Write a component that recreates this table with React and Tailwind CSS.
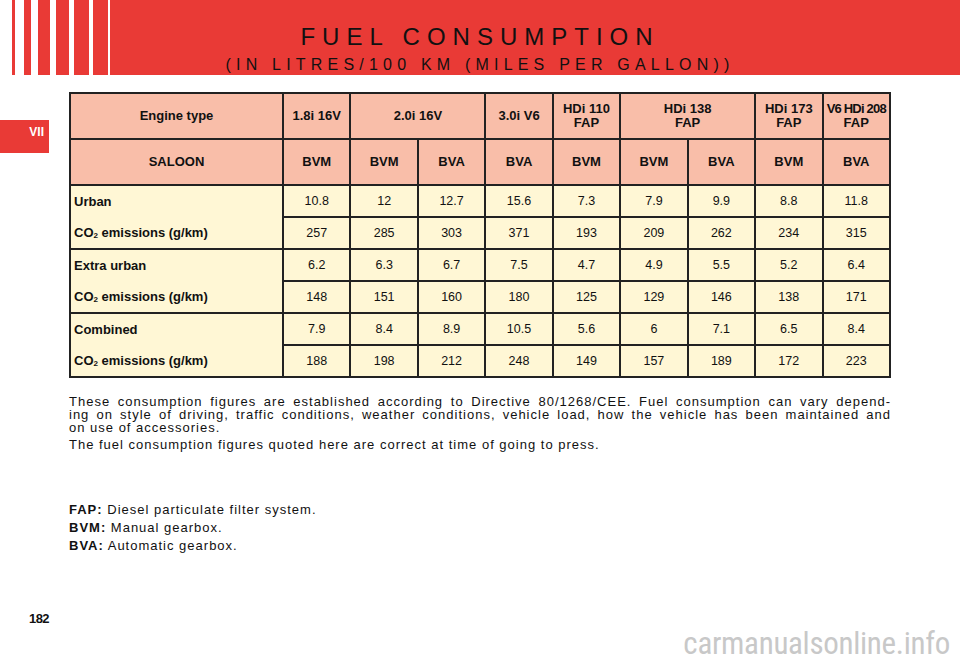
import React from "react";

const models = [
  { name: "1.8i 16V", span: 1 },
  { name: "2.0i 16V", span: 2 },
  { name: "3.0i V6", span: 1 },
  { name: ["HDi 110", "FAP"], span: 1 },
  { name: ["HDi 138", "FAP"], span: 2 },
  { name: ["HDi 173", "FAP"], span: 1 },
  { name: ["V6 HDi 208", "FAP"], span: 1, tight: true },
];

const gearboxes = ["BVM", "BVM", "BVA", "BVA", "BVM", "BVM", "BVA", "BVM", "BVA"];

const sections = [
  {
    label: "Urban",
    fuel: ["10.8", "12", "12.7", "15.6", "7.3", "7.9", "9.9", "8.8", "11.8"],
    co2: ["257", "285", "303", "371", "193", "209", "262", "234", "315"],
  },
  {
    label: "Extra urban",
    fuel: ["6.2", "6.3", "6.7", "7.5", "4.7", "4.9", "5.5", "5.2", "6.4"],
    co2: ["148", "151", "160", "180", "125", "129", "146", "138", "171"],
  },
  {
    label: "Combined",
    fuel: ["7.9", "8.4", "8.9", "10.5", "5.6", "6", "7.1", "6.5", "8.4"],
    co2: ["188", "198", "212", "248", "149", "157", "189", "172", "223"],
  },
];

const Co2Label = () => (
  <span>
    CO<sub className="text-[8px] relative top-[1px]">2</sub> emissions (g/km)
  </span>
);

const App = () => {
  return (
    <div className="w-[960px] h-[663px] bg-white overflow-hidden flex flex-col font-['Liberation_Sans',Arial,sans-serif] text-[#111]">
      {/* Header band with stripes */}
      <header className="flex h-[75px] shrink-0">
        <div className="w-[12px]" />
        <div className="w-[3px] bg-[#e93a36]" />
        <div className="w-[9px]" />
        <div className="w-[7px] bg-[#e93a36]" />
        <div className="w-[7px]" />
        <div className="w-[12px] bg-[#e93a36]" />
        <div className="w-[6px]" />
        <div className="w-[13px] bg-[#e93a36]" />
        <div className="w-[5px]" />
        <div className="w-[15px] bg-[#e93a36]" />
        <div className="w-[4px]" />
        <div className="w-[15px] bg-[#e93a36]" />
        <div className="w-[2px]" />
        <div className="flex-1 bg-[#e93a36] pr-[110px] flex flex-col items-center pt-[23px]">
          <h1 className="text-[24px] leading-[28px] tracking-[7px] text-[#111] font-normal whitespace-nowrap">
            FUEL CONSUMPTION
          </h1>
          <p className="mt-[5px] text-[16px] leading-[18px] tracking-[5.2px] text-[#111] whitespace-nowrap">
            (IN LITRES/100 KM (MILES PER GALLON))
          </p>
        </div>
      </header>

      {/* Body */}
      <div className="flex flex-1">
        <aside className="w-[69px] shrink-0">
          <div className="mt-[45px] w-[49px] h-[33px] bg-[#e93a36] text-white text-[12px] leading-[14px] font-bold text-right pr-[5px] pt-[5px]">
            VII
          </div>
        </aside>

        <main className="w-[822px] pt-[17px]">
          <table className="w-[822px] table-fixed border-collapse border-2 border-[#222] text-[12.5px]">
            <colgroup>
              <col className="w-[213px]" />
              {gearboxes.map((_, i) => (
                <col key={i} />
              ))}
            </colgroup>
            <thead className="text-[13px]">
              <tr className="bg-[#f9bea9]">
                <th className="h-[46px] border-2 border-[#222] font-bold">Engine type</th>
                {models.map((m, i) => (
                  <th
                    key={i}
                    colSpan={m.span}
                    className={`h-[46px] border-2 border-[#222] font-bold leading-[14px] ${m.tight ? "tracking-[-0.8px]" : ""}`}
                  >
                    {Array.isArray(m.name) ? (
                      <>
                        <span className="block">{m.name[0]}</span>
                        <span className="block tracking-normal">{m.name[1]}</span>
                      </>
                    ) : (
                      m.name
                    )}
                  </th>
                ))}
              </tr>
              <tr className="bg-[#f9bea9]">
                <th className="h-[46px] border-2 border-[#222] font-bold">SALOON</th>
                {gearboxes.map((g, i) => (
                  <th key={i} className="h-[46px] border-2 border-[#222] font-bold">
                    {g}
                  </th>
                ))}
              </tr>
            </thead>
            <tbody className="bg-[#fff7d5]">
              {sections.map((s) => (
                <React.Fragment key={s.label}>
                  <tr>
                    <td className="h-[32px] border-2 border-b-0 border-[#222] font-bold text-left pl-[3px] text-[13px]">
                      {s.label}
                    </td>
                    {s.fuel.map((v, i) => (
                      <td key={i} className="h-[32px] border-2 border-[#222] text-center">
                        {v}
                      </td>
                    ))}
                  </tr>
                  <tr>
                    <td className="h-[32px] border-2 border-t-0 border-[#222] font-bold text-left pl-[3px] text-[13px]">
                      <Co2Label />
                    </td>
                    {s.co2.map((v, i) => (
                      <td key={i} className="h-[32px] border-2 border-[#222] text-center">
                        {v}
                      </td>
                    ))}
                  </tr>
                </React.Fragment>
              ))}
            </tbody>
          </table>

          {/* Notes */}
          <div className="mt-[17px] text-[13px] tracking-[1px] text-[#111]">
            <div className="leading-[13px]">
              <p className="text-justify [text-align-last:justify] whitespace-nowrap">
                These consumption figures are established according to Directive 80/1268/CEE. Fuel consumption can vary depend-
              </p>
              <p className="text-justify [text-align-last:justify] whitespace-nowrap">
                ing on style of driving, traffic conditions, weather conditions, vehicle load, how the vehicle has been maintained and
              </p>
              <p>on use of accessories.</p>
            </div>
            <p className="mt-[4px] leading-[13px]">
              The fuel consumption figures quoted here are correct at time of going to press.
            </p>

            <div className="mt-[52px] flex flex-col gap-[5px] leading-[13px]">
              <p>
                <span className="font-bold">FAP:</span> Diesel particulate filter system.
              </p>
              <p>
                <span className="font-bold">BVM:</span> Manual gearbox.
              </p>
              <p>
                <span className="font-bold">BVA:</span> Automatic gearbox.
              </p>
            </div>
          </div>
        </main>
      </div>

      {/* Footer */}
      <footer className="relative h-[55px] shrink-0">
        <p className="pl-[29px] pt-[3px] text-[13px] leading-[16px] font-bold tracking-[-0.6px]">182</p>
        <p className="absolute right-[10px] bottom-[4px] text-[31px] leading-[30px] text-[#c8c8c8] font-['Liberation_Sans_Narrow','Roboto_Condensed',sans-serif] tracking-[-0.3px]">
          carmanualsonline.info
        </p>
      </footer>
    </div>
  );
};

export default App;
